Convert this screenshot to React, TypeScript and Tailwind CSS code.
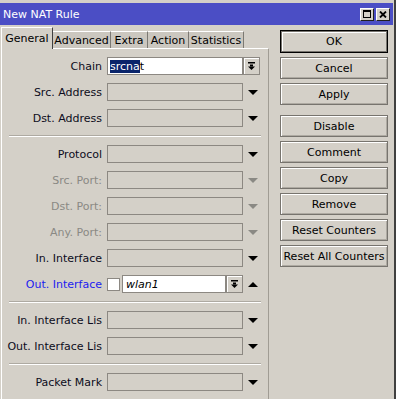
import type { ReactNode } from "react";

type Tone = "normal" | "disabled" | "blue";

function Tri({ up = false, disabled = false }: { up?: boolean; disabled?: boolean }) {
  return (
    <svg width="10" height="5" viewBox="0 0 10 5" className={disabled ? "fill-[#8a8984]" : "fill-black"}>
      <polygon points={up ? "0,5 10,5 5,0" : "0,0 10,0 5,5"} />
    </svg>
  );
}

function DropBtn() {
  return (
    <div className="flex h-[18px] w-[17px] shrink-0 items-center justify-center border border-[#8c8882] bg-[#d4d0c8] shadow-[inset_1px_1px_0_#ffffff]">
      <svg width="7" height="8" viewBox="0 0 7 8" className="fill-black">
        <rect x="0" y="0" width="7" height="1.5" />
        <rect x="2" y="2.5" width="3" height="2" />
        <polygon points="0,4.5 7,4.5 3.5,8" />
      </svg>
    </div>
  );
}

function Row({ label, tone = "normal", children }: { label: string; tone?: Tone; children: ReactNode }) {
  const color = tone === "disabled" ? "text-[#8a8984]" : tone === "blue" ? "text-[#1c1cf0]" : "text-[#0c0c20]";
  return (
    <div className="flex h-[18px] items-center">
      <div className={`w-[101px] shrink-0 overflow-hidden whitespace-nowrap pr-[1px] text-right ${color}`}>{label}</div>
      <div className="ml-[4px] flex items-center">{children}</div>
    </div>
  );
}

function EmptyField({ label, tone = "normal" }: { label: string; tone?: Tone }) {
  return (
    <Row label={label} tone={tone}>
      <div className="h-[18px] w-[136px] border border-[#8c8882] bg-[#d4d0c8]" />
      <div className="flex w-[19px] justify-center">
        <Tri disabled={tone === "disabled"} />
      </div>
    </Row>
  );
}

function Sep() {
  return <div className="mx-[7px] h-[2px] border-t border-b border-t-[#aeaaa2] border-b-white" />;
}

const buttons1 = ["Cancel", "Apply"];
const buttons2 = ["Disable", "Comment", "Copy", "Remove", "Reset Counters", "Reset All Counters"];

function Btn({ children }: { children: ReactNode }) {
  return (
    <div className="flex h-[22px] w-[108px] items-center justify-center whitespace-nowrap border border-[#77746e] bg-[#d4d0c8] text-black shadow-[inset_1px_1px_0_#ffffff,inset_-1px_-1px_0_#aeaaa2]">
      {children}
    </div>
  );
}

export default function App() {
  return (
    <div className="h-[399px] w-[396px] overflow-hidden border-r-2 border-[#404040] bg-[#d4d0c8] pt-[3px] font-['DejaVu_Sans',sans-serif] text-[11px] leading-[13px]">
      {/* title bar */}
      <div className="mr-[1px] flex h-[22px] items-center justify-between bg-[#4b4ec5] pl-[3px] pr-[3px] text-white">
        <span>New NAT Rule</span>
        <div className="flex gap-[2px]">
          <div className="flex h-[13px] w-[14px] items-center justify-center border border-b-[#202020] border-l-white border-r-[#202020] border-t-white bg-[#d4d0c8]">
            <div className="h-[8px] w-[8px] border border-t-2 border-black" />
          </div>
          <div className="flex h-[13px] w-[14px] items-center justify-center border border-b-[#202020] border-l-white border-r-[#202020] border-t-white bg-[#d4d0c8]">
            <svg width="8" height="7" viewBox="0 0 8 7">
              <path d="M1 0.5 L7 6.5 M7 0.5 L1 6.5" stroke="black" strokeWidth="1.8" />
            </svg>
          </div>
        </div>
      </div>

      <div className="flex">
        {/* left: tabs + panel */}
        <div className="flex w-[270px] flex-col pl-[1px]">
          <div className="relative z-10 flex h-[23px] items-end">
            <div className="-mb-[1px] flex h-[22px] w-[52px] items-start justify-center border-l border-r border-t border-l-white border-r-[#404040] border-t-white bg-[#d4d0c8] pt-[4px] text-black">
              General
            </div>
            {[
              ["Advanced", "w-[58px]"],
              ["Extra", "w-[37px]"],
              ["Action", "w-[41px]"],
              ["Statistics", "w-[55px]"],
            ].map(([t, w]) => (
              <div
                key={t}
                className={`flex h-[17px] ${w} items-center justify-center border-r border-t border-r-[#7c7973] border-t-white bg-[#cbc7bf] text-black`}
              >
                {t}
              </div>
            ))}
          </div>
          <div className="flex h-[360px] w-[268px] flex-col gap-[8px] border-l border-r border-t border-l-white border-r-[#a09c94] border-t-white pt-[8px]">
            <Row label="Chain">
              <div className="flex h-[18px] w-[136px] items-center border border-[#8c8882] bg-white pl-[2px]">
                <span className="bg-[#0a246a] text-white">srcna</span>
                <span className="text-black">t</span>
              </div>
              <DropBtn />
            </Row>
            <EmptyField label="Src. Address" />
            <EmptyField label="Dst. Address" />
            <Sep />
            <EmptyField label="Protocol" />
            <EmptyField label="Src. Port:" tone="disabled" />
            <EmptyField label="Dst. Port:" tone="disabled" />
            <EmptyField label="Any. Port:" tone="disabled" />
            <EmptyField label="In. Interface" />
            <Row label="Out. Interface" tone="blue">
              <div className="h-[13px] w-[13px] shrink-0 border border-[#8c8882] bg-white" />
              <div className="ml-[2px] flex h-[18px] w-[104px] items-center border border-[#8c8882] bg-white pl-[3px] italic text-black">
                wlan1
              </div>
              <DropBtn />
              <div className="flex w-[19px] justify-center">
                <Tri up />
              </div>
            </Row>
            <Sep />
            <EmptyField label="In. Interface Lis" />
            <EmptyField label="Out. Interface Lis" />
            <Sep />
            <EmptyField label="Packet Mark" />
          </div>
        </div>

        {/* right: buttons */}
        <div className="ml-[10px] flex flex-col pt-[5px]">
          <div className="border border-black">
            <div className="flex h-[21px] w-[106px] items-center justify-center border border-[#77746e] bg-[#d4d0c8] text-black shadow-[inset_1px_1px_0_#ffffff]">
              OK
            </div>
          </div>
          <div className="mt-[4px] flex flex-col gap-[4px]">
            {buttons1.map((b) => (
              <Btn key={b}>{b}</Btn>
            ))}
          </div>
          <div className="mt-[10px] flex flex-col gap-[4px]">
            {buttons2.map((b) => (
              <Btn key={b}>{b}</Btn>
            ))}
          </div>
        </div>
      </div>
    </div>
  );
}
